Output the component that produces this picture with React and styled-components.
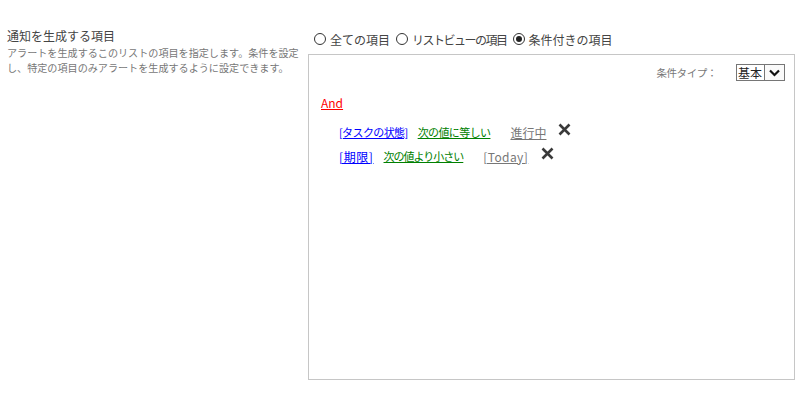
import React from "react";
import styled, { createGlobalStyle } from "styled-components";

const GlobalStyle = createGlobalStyle`
  body {
    margin: 0;
    background: #ffffff;
    font-family: "Noto Sans CJK JP", "Noto Sans", sans-serif;
  }
`;

const Page = styled.div`
  width: 801px;
  height: 396px;
  display: flex;
  padding: 27px 0 0 7px;
  box-sizing: border-box;
  gap: 13px;
`;

const Side = styled.div`
  width: 288px;
  display: flex;
  flex-direction: column;
`;

const Title = styled.div`
  font-size: 12px;
  line-height: 18px;
  color: #444444;
`;

const Desc = styled.div`
  font-size: 10.1px;
  line-height: 15px;
  color: #777777;
  white-space: nowrap;
`;

const Main = styled.div`
  display: flex;
  flex-direction: column;
  width: 487px;
`;

const RadioRow = styled.div`
  display: flex;
  align-items: center;
  gap: 6px;
  height: 22px;
  padding-left: 6px;
  margin-top: 1px;
`;

const RadioItem = styled.label`
  display: flex;
  align-items: center;
  gap: 2px;
  font-size: 12px;
  color: #444444;
  letter-spacing: ${({ $tight }) => ($tight ? "-1.5px" : "0")};
`;

const Circle = styled.span`
  width: 10px;
  height: 10px;
  border: 1px solid #333333;
  border-radius: 50%;
  display: flex;
  align-items: center;
  justify-content: center;
  margin-right: 2px;
  &::after {
    content: "";
    display: ${({ $checked }) => ($checked ? "block" : "none")};
    width: 6px;
    height: 6px;
    border-radius: 50%;
    background: #222222;
  }
`;

const Box = styled.div`
  margin-top: 4px;
  height: 326px;
  border: 1px solid #c6c6c6;
  box-sizing: border-box;
  padding: 9px 9px 0 12px;
  display: flex;
  flex-direction: column;
`;

const TypeRow = styled.div`
  display: flex;
  justify-content: flex-end;
  align-items: center;
  gap: 19px;
`;

const TypeLabel = styled.span`
  font-size: 10.5px;
  letter-spacing: -0.4px;
  color: #777777;
`;

const Select = styled.div`
  display: flex;
  align-items: center;
  height: 17px;
  border: 1px solid #767676;
  box-sizing: border-box;
  background: #ffffff;
`;

const SelectText = styled.span`
  font-size: 12px;
  color: #222222;
  padding: 0 2px 0 1px;
  line-height: 15px;
`;

const SelectButton = styled.span`
  width: 19px;
  height: 15px;
  border-left: 1px solid #767676;
  display: flex;
  align-items: center;
  justify-content: center;
  background: #fafafa;
`;

const Operator = styled.a`
  margin-top: 13px;
  font-size: 12px;
  color: #ff0000;
  text-decoration: underline;
  align-self: flex-start;
`;

const Rules = styled.div`
  display: flex;
  flex-direction: column;
  margin-top: 10px;
  padding-left: 18px;
  gap: 2px;
`;

const Rule = styled.div`
  display: flex;
  align-items: center;
  height: 22px;
`;

const Link = styled.a`
  font-size: ${({ $size }) => $size || 11}px;
  color: ${({ $tone }) => $tone};
  text-decoration: underline;
  margin-right: ${({ $gap }) => $gap}px;
  letter-spacing: ${({ $ls }) => $ls ?? -0.6}px;
  white-space: nowrap;
`;

const Remove = styled.span`
  display: flex;
  margin-top: -6px;
`;

const Cross = () => (
  <svg width="13" height="13" viewBox="0 0 13 13">
    <path d="M1.5 1.5 L11.5 11.5 M11.5 1.5 L1.5 11.5" stroke="#3a3a3a" strokeWidth="2.6" strokeLinecap="butt" />
  </svg>
);

const Chevron = () => (
  <svg width="11" height="8" viewBox="0 0 11 8">
    <path d="M1 1.5 L5.5 6 L10 1.5" stroke="#111111" strokeWidth="2.2" fill="none" />
  </svg>
);

export default function App() {
  return (
    <>
      <GlobalStyle />
      <Page>
        <Side>
          <Title>通知を生成する項目</Title>
          <Desc>
            アラートを生成するこのリストの項目を指定します。条件を設定
            <br />
            し、特定の項目のみアラートを生成するように設定できます。
          </Desc>
        </Side>
        <Main>
          <RadioRow>
            <RadioItem>
              <Circle />
              全ての項目
            </RadioItem>
            <RadioItem $tight>
              <Circle />
              リストビューの項目
            </RadioItem>
            <RadioItem>
              <Circle $checked />
              条件付きの項目
            </RadioItem>
          </RadioRow>
          <Box>
            <TypeRow>
              <TypeLabel>条件タイプ：</TypeLabel>
              <Select>
                <SelectText>基本</SelectText>
                <SelectButton>
                  <Chevron />
                </SelectButton>
              </Select>
            </TypeRow>
            <Operator>And</Operator>
            <Rules>
              <Rule>
                <Link $tone="#0000ff" $gap={10}>[タスクの状態]</Link>
                <Link $tone="#008000" $gap={20}>次の値に等しい</Link>
                <Link $tone="#777777" $gap={12} $size={12} $ls={0}>進行中</Link>
                <Remove>
                  <Cross />
                </Remove>
              </Rule>
              <Rule>
                <Link $tone="#0000ff" $gap={10} $size={12} $ls={0.6}>[期限]</Link>
                <Link $tone="#008000" $gap={20} $ls={-1}>次の値より小さい</Link>
                <Link $tone="#777777" $gap={13} $size={12} $ls={0.4}>[Today]</Link>
                <Remove>
                  <Cross />
                </Remove>
              </Rule>
            </Rules>
          </Box>
        </Main>
      </Page>
    </>
  );
}
